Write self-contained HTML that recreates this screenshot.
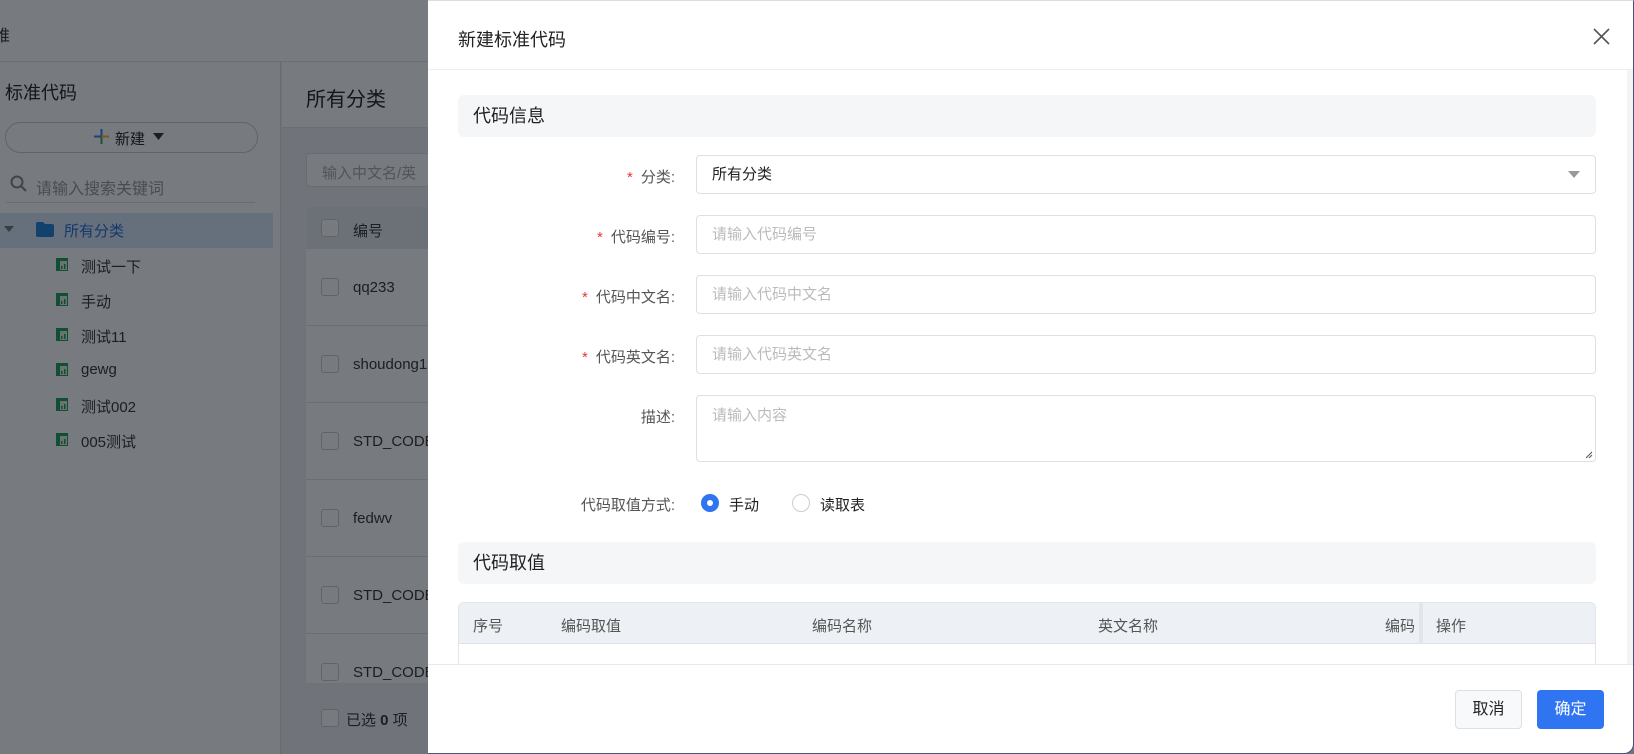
<!DOCTYPE html>
<html><head><meta charset="utf-8"><style>
*{box-sizing:border-box;margin:0;padding:0}
body{width:1634px;height:754px;overflow:hidden;position:relative;font-family:"Liberation Sans","Noto Sans CJK SC",sans-serif;background:#f0f2f5;color:#333}
.abs{position:absolute}
.t{position:absolute;white-space:nowrap}
.cb{position:absolute;width:18px;height:18px;border:1px solid #ccc;border-radius:3px;background:#fff}
.overlay{position:absolute;left:0;top:0;width:1634px;height:754px;background:rgba(8,12,20,.55)}
.drawer{position:absolute;left:428px;top:0;width:1206px;height:754px;background:#fff;border-top:1px solid #ddd;border-radius:0 0 10px 0;border-right:1px solid #4a5080;border-bottom:1px solid #4a5080}
.lbl{position:absolute;right:958px;font-size:15px;color:#555;text-align:right;white-space:nowrap}
.lbl b{color:#e53935;font-weight:normal;margin-right:8px}
.inp{position:absolute;left:268px;width:900px;height:39px;border:1px solid #dcdfe6;border-radius:4px;font-size:15px;color:#bbb;padding:0 15px;line-height:37px}
.sec{position:absolute;left:30px;width:1138px;height:42px;background:#f5f6f8;border-radius:6px;font-size:18px;color:#222;padding-left:15px;line-height:42px}
.fi{position:absolute;width:12px;height:13px}
</style></head><body>
<div class="abs" style="left:0;top:0;width:1634px;height:62px;background:#fff;border-bottom:1px solid #e5e5e5"></div>
<div class="t" style="left:-6px;top:22px;font-size:16px">唯</div>
<div class="abs" style="left:0;top:62px;width:281px;height:692px;background:#fff;border-right:1px solid #ddd"></div>
<div class="t" style="left:5px;top:79px;font-size:18px;color:#222">标准代码</div>
<div class="abs" style="left:5px;top:122px;width:253px;height:31px;border:1px solid #ccc;border-radius:16px"></div>
<svg class="abs" style="left:94px;top:129px" width="15" height="15"><path d="M7.5 0V7.5" stroke="#3b82f6" stroke-width="2"/><path d="M7.5 7.5V15" stroke="#34a853" stroke-width="2"/><path d="M0 7.5H7.5" stroke="#3b82f6" stroke-width="2"/><path d="M7.5 7.5H15" stroke="#fbbc05" stroke-width="2"/></svg>
<div class="t" style="left:115px;top:128px;font-size:15px;color:#222">新建</div>
<svg class="abs" style="left:153px;top:133px" width="11" height="8"><path d="M0 0H11L5.5 7Z" fill="#333"/></svg>
<svg class="abs" style="left:10px;top:175px" width="17" height="17"><circle cx="7" cy="7" r="5.5" fill="none" stroke="#888" stroke-width="2"/><path d="M11 11L16 16" stroke="#888" stroke-width="2.2"/></svg>
<div class="t" style="left:36px;top:175px;font-size:16px;color:#999">请输入搜索关键词</div>
<div class="abs" style="left:6px;top:202px;width:249px;height:1px;background:#ddd"></div>
<div class="abs" style="left:0;top:213px;width:273px;height:35px;background:#d7e8fb"></div>
<svg class="abs" style="left:4px;top:226px" width="10" height="7"><path d="M0 0H10L5 6Z" fill="#777"/></svg>
<svg class="abs" style="left:36px;top:222px" width="18" height="15"><path d="M0 2Q0 0 2 0H7L9 2H16Q18 2 18 4V13Q18 15 16 15H2Q0 15 0 13Z" fill="#1e80d8"/></svg>
<div class="t" style="left:64px;top:220px;font-size:15px;color:#2a6ad8">所有分类</div>
<div class="t" style="left:81px;top:256px;font-size:15px">测试一下</div>
<div class="t" style="left:81px;top:291px;font-size:15px">手动</div>
<div class="t" style="left:81px;top:326px;font-size:15px">测试11</div>
<div class="t" style="left:81px;top:361px;font-size:15px">gewg</div>
<div class="t" style="left:81px;top:396px;font-size:15px">测试002</div>
<div class="t" style="left:81px;top:431px;font-size:15px">005测试</div>
<svg class="abs" style="left:56px;top:258px" width="12" height="200"><defs><g id="s"><rect width="12" height="13" fill="#1f9d55"/><rect x="4" y="3" width="7" height="9" fill="#fff" opacity=".85"/><rect x="5" y="8" width="1.5" height="3" fill="#1f9d55"/><rect x="8" y="6" width="1.5" height="5" fill="#1f9d55"/></g></defs>
<use href="#s" y="0"/><use href="#s" y="35"/><use href="#s" y="70"/><use href="#s" y="105"/><use href="#s" y="140"/><use href="#s" y="175"/></svg>
<div class="abs" style="left:282px;top:62px;width:200px;height:66px;background:#fff;border-bottom:1px solid #e5e5e5"></div>
<div class="t" style="left:306px;top:83px;font-size:20px;color:#222">所有分类</div>
<div class="abs" style="left:306px;top:153px;width:200px;height:34px;border:1px solid #ddd;border-radius:4px;background:#fff"></div>
<div class="t" style="left:322px;top:162px;font-size:15px;color:#aaa">输入中文名/英</div>
<div class="abs" style="left:306px;top:207px;width:200px;height:476px;background:#fff;border-radius:6px 0 0 0"></div>
<div class="abs" style="left:306px;top:207px;width:200px;height:42px;background:#e6ebf2;border-radius:6px 0 0 0"></div>
<div class="cb" style="left:321px;top:219px"></div><div class="t" style="left:353px;top:220px;font-size:15px">编号</div>
<div class="cb" style="left:321px;top:278px"></div><div class="t" style="left:353px;top:279px;font-size:15px">qq233</div>
<div class="abs" style="left:306px;top:325px;width:200px;height:1px;background:#e5e5e5"></div>
<div class="cb" style="left:321px;top:355px"></div><div class="t" style="left:353px;top:356px;font-size:15px">shoudong1</div>
<div class="abs" style="left:306px;top:402px;width:200px;height:1px;background:#e5e5e5"></div>
<div class="cb" style="left:321px;top:432px"></div><div class="t" style="left:353px;top:433px;font-size:15px">STD_CODE</div>
<div class="abs" style="left:306px;top:479px;width:200px;height:1px;background:#e5e5e5"></div>
<div class="cb" style="left:321px;top:509px"></div><div class="t" style="left:353px;top:510px;font-size:15px">fedwv</div>
<div class="abs" style="left:306px;top:556px;width:200px;height:1px;background:#e5e5e5"></div>
<div class="cb" style="left:321px;top:586px"></div><div class="t" style="left:353px;top:587px;font-size:15px">STD_CODE</div>
<div class="abs" style="left:306px;top:633px;width:200px;height:1px;background:#e5e5e5"></div>
<div class="cb" style="left:321px;top:663px"></div><div class="t" style="left:353px;top:664px;font-size:15px">STD_CODE</div>
<div class="abs" style="left:306px;top:683px;width:200px;height:71px;background:#f0f2f5"></div>
<div class="cb" style="left:321px;top:709px"></div><div class="t" style="left:346px;top:709px;font-size:15px">已选 <b>0</b> 项</div>
<div class="overlay"></div>

<div class="drawer">
 <div class="t" style="left:30px;top:25px;font-size:18px;color:#222">新建标准代码</div>
 <svg class="abs" style="left:1165px;top:27px" width="17" height="17" viewBox="0 0 17 17"><path d="M1 1L16 16M16 1L1 16" stroke="#555" stroke-width="1.6"/></svg>
 <div class="abs" style="left:0;top:68px;width:1205px;height:1px;background:#eceef2"></div>
 <div class="abs" style="left:1199px;top:69px;width:6px;height:594px;background:#f3f4f6"></div>
 <div class="sec" style="top:94px">代码信息</div>

 <div class="lbl" style="top:165px"><b>*</b>分类:</div>
 <div class="inp" style="top:154px;color:#222">所有分类<svg style="position:absolute;right:15px;top:15px" width="12" height="8"><path d="M0 0H12L6 7Z" fill="#999"/></svg></div>
 <div class="lbl" style="top:225px"><b>*</b>代码编号:</div>
 <div class="inp" style="top:214px">请输入代码编号</div>
 <div class="lbl" style="top:285px"><b>*</b>代码中文名:</div>
 <div class="inp" style="top:274px">请输入代码中文名</div>
 <div class="lbl" style="top:345px"><b>*</b>代码英文名:</div>
 <div class="inp" style="top:334px">请输入代码英文名</div>
 <div class="lbl" style="top:405px">描述:</div>
 <div class="inp" style="top:394px;height:67px;line-height:20px;padding-top:10px">请输入内容
  <svg style="position:absolute;right:2px;bottom:2px" width="8" height="8"><path d="M7 1L1 7M7 4L4 7" stroke="#555" stroke-width="1"/></svg></div>
 <div class="lbl" style="top:493px">代码取值方式:</div>
 <div class="abs" style="left:273px;top:493px;width:18px;height:18px;border-radius:50%;background:#2f74f0"><div class="abs" style="left:6px;top:6px;width:6px;height:6px;border-radius:50%;background:#fff"></div></div>
 <div class="t" style="left:301px;top:493px;font-size:15px;color:#222">手动</div>
 <div class="abs" style="left:364px;top:493px;width:18px;height:18px;border-radius:50%;border:1px solid #ccc"></div>
 <div class="t" style="left:392px;top:493px;font-size:15px;color:#222">读取表</div>

 <div class="sec" style="top:541px">代码取值</div>
 <div class="abs" style="left:30px;top:601px;width:1138px;height:62px;border:1px solid #e2e5ea;border-bottom:none;border-radius:6px 6px 0 0;overflow:hidden">
  <div class="abs" style="left:0;top:0;width:1138px;height:41px;background:#edf0f4;border-bottom:1px solid #dfe3e8"></div>
  <div class="abs" style="left:960px;top:0;width:4px;height:41px;background:#e2e5ea"></div>
  <div class="t" style="left:14px;top:12px;font-size:15px;color:#555">序号</div>
  <div class="t" style="left:102px;top:12px;font-size:15px;color:#555">编码取值</div>
  <div class="t" style="left:353px;top:12px;font-size:15px;color:#555">编码名称</div>
  <div class="t" style="left:639px;top:12px;font-size:15px;color:#555">英文名称</div>
  <div class="t" style="left:926px;top:12px;width:34px;overflow:hidden;font-size:15px;color:#555">编码</div>
  <div class="t" style="left:977px;top:12px;font-size:15px;color:#555">操作</div>
 </div>
 <div class="abs" style="left:0;top:663px;width:1205px;height:1px;background:#e8eaee"></div>
 <div class="abs" style="left:1027px;top:689px;width:67px;height:39px;border:1px solid #dcdfe6;border-radius:4px;background:#f8f9fb;font-size:16px;color:#222;text-align:center;line-height:37px">取消</div>
 <div class="abs" style="left:1109px;top:689px;width:67px;height:39px;border-radius:4px;background:#2f74f0;font-size:16px;color:#fff;text-align:center;line-height:39px">确定</div>
</div>
</body></html>
